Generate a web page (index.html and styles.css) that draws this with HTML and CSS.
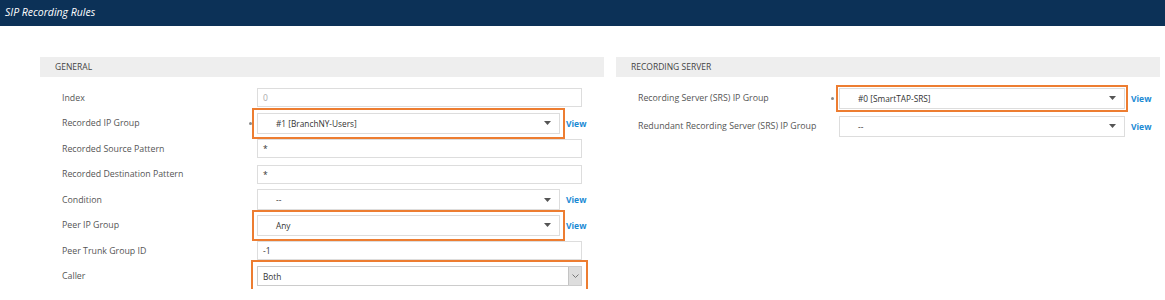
FILE: index.html
```html
<!DOCTYPE html>
<html lang="en">
<head>
<meta charset="UTF-8">
<meta name="viewport" content="width=device-width, initial-scale=1.0">
<title>SIP Recording Rules</title>
<link rel="stylesheet" href="styles.css">
</head>
<body>

<div class="titlebar">SIP Recording Rules</div>

<div class="panels">
  <div class="panel panel-general">
    <div class="panel-head">GENERAL</div>
    <div class="form">
      <div class="row">
        <label>Index</label>
        <div class="input disabled">0</div>
      </div>
      <div class="row">
        <label>Recorded IP Group</label>
        <div class="field">
          <div class="select req hl">
            <span>#1 [BranchNY-Users]</span>
            <svg class="caret" width="7" height="4" viewBox="0 0 7 4"><path d="M0 0h7L3.5 4z"/></svg>
          </div>
          <a class="view">View</a>
        </div>
      </div>
      <div class="row">
        <label>Recorded Source Pattern</label>
        <div class="input">*</div>
      </div>
      <div class="row">
        <label>Recorded Destination Pattern</label>
        <div class="input">*</div>
      </div>
      <div class="row">
        <label>Condition</label>
        <div class="field">
          <div class="select">
            <span>--</span>
            <svg class="caret" width="7" height="4" viewBox="0 0 7 4"><path d="M0 0h7L3.5 4z"/></svg>
          </div>
          <a class="view">View</a>
        </div>
      </div>
      <div class="row">
        <label>Peer IP Group</label>
        <div class="field">
          <div class="select hl">
            <span>Any</span>
            <svg class="caret" width="7" height="4" viewBox="0 0 7 4"><path d="M0 0h7L3.5 4z"/></svg>
          </div>
          <a class="view">View</a>
        </div>
      </div>
      <div class="row">
        <label>Peer Trunk Group ID</label>
        <div class="input">-1</div>
      </div>
      <div class="row">
        <label>Caller</label>
        <div class="select plain hl hl-wide">
          <span>Both</span>
          <span class="arrowbox">
            <svg width="7" height="4" viewBox="0 0 7 4"><path d="M0.5 0.5l3 3 3-3" fill="none" stroke="#777" stroke-width="1"/></svg>
          </span>
        </div>
      </div>
    </div>
  </div>

  <div class="panel panel-server">
    <div class="panel-head">RECORDING SERVER</div>
    <div class="form">
      <div class="row">
        <label>Recording Server (SRS) IP Group</label>
        <div class="field">
          <div class="select req hl hl-tight">
            <span>#0 [SmartTAP-SRS]</span>
            <svg class="caret" width="7" height="4" viewBox="0 0 7 4"><path d="M0 0h7L3.5 4z"/></svg>
          </div>
          <a class="view">View</a>
        </div>
      </div>
      <div class="row">
        <label>Redundant Recording Server (SRS) IP Group</label>
        <div class="field">
          <div class="select">
            <span>--</span>
            <svg class="caret" width="7" height="4" viewBox="0 0 7 4"><path d="M0 0h7L3.5 4z"/></svg>
          </div>
          <a class="view">View</a>
        </div>
      </div>
    </div>
  </div>
</div>

</body>
</html>
```

FILE: styles.css
```css
body {
  margin: 0;
  font-family: "Open Sans", Arial, sans-serif;
  background-color: #fff;
  color: #444;
}

.titlebar {
  height: 26px;
  line-height: 25px;
  padding-left: 5px;
  background-color: #0c3157;
  color: #fff;
  font-size: 10.5px;
  font-style: italic;
}

.panels {
  display: flex;
  gap: 12px;
  padding: 31px 5px 0 40px;
}

.panel-general {
  width: 564px;
}

.panel-server {
  flex: 1;
}

.panel-head {
  height: 20px;
  line-height: 20px;
  padding-left: 15px;
  background-color: #eeeeee;
  font-size: 8.5px;
  color: #444;
}

.form {
  padding-top: 8px;
}

.row {
  display: flex;
  align-items: center;
  height: 25.5px;
  padding-left: 22px;
  font-size: 8.5px;
}

.row label {
  width: 195px;
  flex: none;
  font-size: 8.8px;
  color: #555;
}

.panel-server .form {
  padding-top: 7px;
}

.panel-server .row {
  height: 28px;
}

.panel-server .row label {
  width: 201px;
}

.input {
  box-sizing: border-box;
  width: 325px;
  height: 19px;
  line-height: 17px;
  padding-left: 5px;
  border: 1px solid #dddddd;
  color: #333;
}

.input.disabled {
  color: #aaa;
}

.field {
  display: flex;
  align-items: center;
  gap: 6px;
}

.select {
  position: relative;
  box-sizing: border-box;
  display: flex;
  align-items: center;
  justify-content: space-between;
  width: 303px;
  height: 21px;
  padding: 0 8px 0 18px;
  border: 1px solid #dddddd;
  color: #333;
  font-size: 8.3px;
}

.panel-server .select {
  width: 286px;
}

.select.req::before {
  content: "";
  position: absolute;
  left: -9px;
  top: 8px;
  width: 3px;
  height: 3px;
  border-radius: 50%;
  background-color: #8a8a8a;
}

.caret {
  fill: #555;
}

.select.plain {
  width: 325px;
  height: 20px;
  padding: 0 0 0 5px;
  border-color: #cccccc;
}

.arrowbox {
  display: flex;
  align-items: center;
  justify-content: center;
  width: 12px;
  height: 18px;
  background-color: #dddddd;
  border-left: 1px solid #c4c4c4;
}

.hl {
  outline: 2px solid #ed7d31;
  outline-offset: 3px;
}

.hl-wide {
  outline-offset: 4px;
}

.hl-tight {
  outline-offset: 1px;
}

.view {
  color: #1a8ad4;
  font-weight: bold;
  font-size: 8.5px;
  cursor: pointer;
}
```
